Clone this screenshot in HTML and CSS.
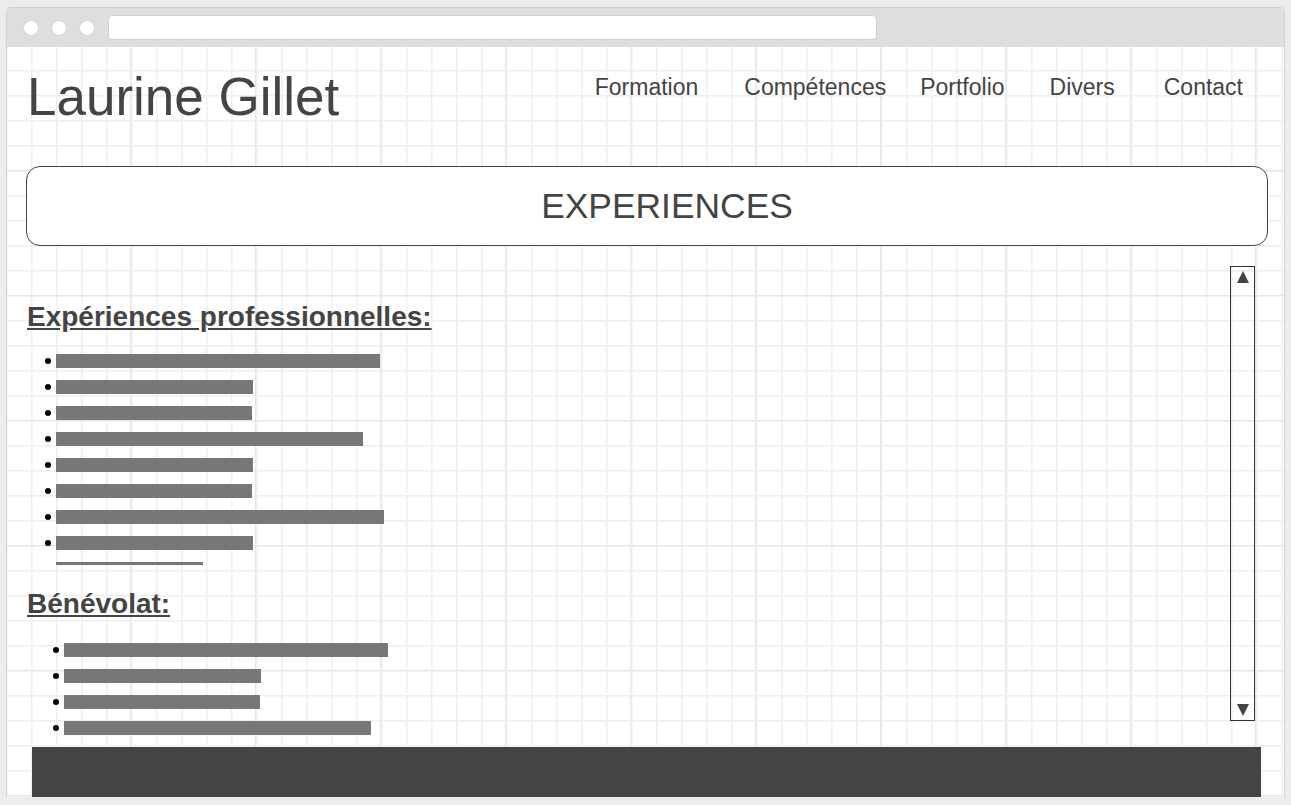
FILE: index.html
```html
<!DOCTYPE html>
<html lang="fr">
<head>
<meta charset="utf-8">
<title>Laurine Gillet</title>
<link rel="stylesheet" href="styles.css">
</head>
<body>
<div class="window">
  <div class="titlebar">
    <span class="dot"></span><span class="dot"></span><span class="dot"></span>
    <div class="urlbar"></div>
  </div>
  <div class="page">
    <div class="wrap">
      <header class="header">
        <h1 class="name">Laurine Gillet</h1>
        <nav class="nav">
          <a class="nav-item" href="#">Formation</a>
          <a class="nav-item" href="#">Compétences</a>
          <a class="nav-item" href="#">Portfolio</a>
          <a class="nav-item" href="#">Divers</a>
          <a class="nav-item" href="#">Contact</a>
        </nav>
      </header>
      <div class="banner">EXPERIENCES</div>
      <section class="scroller">
        <div class="scroll-content">
          <h2 class="section-title">Expériences professionnelles:</h2>
          <ul class="bars">
            <li><span class="bar" style="width:324px"></span></li>
            <li><span class="bar" style="width:197px"></span></li>
            <li><span class="bar" style="width:196px"></span></li>
            <li><span class="bar" style="width:307px"></span></li>
            <li><span class="bar" style="width:197px"></span></li>
            <li><span class="bar" style="width:196px"></span></li>
            <li><span class="bar" style="width:328px"></span></li>
            <li><span class="bar" style="width:197px"></span></li>
          </ul>
          <div class="rule"></div>
          <h2 class="section-title second">Bénévolat:</h2>
          <ul class="bars indent">
            <li><span class="bar" style="width:324px"></span></li>
            <li><span class="bar" style="width:197px"></span></li>
            <li><span class="bar" style="width:196px"></span></li>
            <li><span class="bar" style="width:307px"></span></li>
          </ul>
        </div>
        <div class="scrollbar">
          <span class="arrow up"></span>
          <span class="arrow down"></span>
        </div>
      </section>
    </div>
    <footer class="footer"></footer>
  </div>
</div>
</body>
</html>
```
FILE: styles.css
```css
* { box-sizing: border-box; }
html, body { margin: 0; padding: 0; }
body {
  background: #ececec;
  font-family: "Liberation Sans", Arial, sans-serif;
  color: #444;
  height: 805px;
  overflow: hidden;
}
.window {
  margin: 7px 0 0 6px;
  width: 1279px;
  border: 1px solid #d2d2d2;
  border-bottom: none;
  border-radius: 5px 5px 0 0;
  overflow: hidden;
  background: #fff;
}
.titlebar {
  height: 39px;
  background: #dedede;
  display: flex;
  align-items: center;
  padding-left: 16px;
}
.dot {
  width: 16px;
  height: 16px;
  border-radius: 50%;
  background: #fff;
  border: 1px solid #d6d6d6;
  margin-right: 12px;
}
.dot:nth-child(3) { margin-right: 13px; }
.urlbar {
  width: 769px;
  height: 25px;
  background: #fff;
  border: 1px solid #cfcfcf;
  border-radius: 4px;
  margin-top: -1px;
}
.page {
  height: 750px;
  background-color: #fff;
  background-image:
    linear-gradient(to right, #e6e6e6 1px, #f1f1f1 1px, #f1f1f1 2px, transparent 2px),
    linear-gradient(to bottom, #e6e6e6 1px, #f1f1f1 1px, #f1f1f1 2px, transparent 2px),
    linear-gradient(to right, #efefef 1px, #f6f6f6 1px, #f6f6f6 2px, transparent 2px),
    linear-gradient(to bottom, #efefef 1px, #f6f6f6 1px, #f6f6f6 2px, transparent 2px);
  background-size: 125px 125px, 125px 125px, 25px 25px, 25px 25px;
  background-position: -2px -2px, -2px -2px, -1px -2px, -1px -2px;
  display: flex;
  flex-direction: column;
}
.wrap {
  padding: 0 16px 0 19px;
}
.header {
  display: flex;
  justify-content: space-between;
  align-items: flex-start;
  padding-top: 23px;
}
.name {
  margin: 0 0 0 1px;
  font-weight: normal;
  font-size: 53px;
  line-height: 53px;
  color: #444;
}
.nav {
  display: flex;
  margin-top: 6px;
  padding-right: 25px;
}
.nav-item {
  font-size: 23px;
  line-height: 23px;
  color: #444;
  text-decoration: none;
}
.nav-item:nth-child(2) { margin-left: 46px; }
.nav-item:nth-child(3) { margin-left: 34px; }
.nav-item:nth-child(4) { margin-left: 45px; }
.nav-item:nth-child(5) { margin-left: 49px; }
.banner {
  margin-top: 43px;
  height: 80px;
  border: 1px solid #444;
  border-radius: 14px;
  background: #fff;
  text-align: center;
  padding-left: 40px;
  font-size: 35.4px;
  line-height: 78px;
  color: #444;
}
.scroller {
  height: 501px;
  display: flex;
  align-items: flex-start;
}
.scroll-content {
  flex: 1;
  height: 501px;
  overflow: hidden;
}
.section-title {
  margin: 55px 0 0 1px;
  font-size: 28px;
  line-height: 32px;
  font-weight: bold;
  text-decoration: underline;
  color: #444;
}
.section-title.second { margin-top: 23px; }
.bars {
  list-style: none;
  margin: 15px 0 0;
  padding: 0 0 0 19px;
}
.bars.indent {
  margin-top: 17px;
  padding-left: 27px;
}
.bars li {
  height: 26px;
  display: flex;
  align-items: center;
}
.bars li::before {
  content: "";
  width: 6px;
  height: 6px;
  border-radius: 50%;
  background: #000;
  margin-right: 5px;
  flex: none;
}
.bar {
  display: block;
  height: 14px;
  background: #777;
}
.rule {
  margin: 6px 0 0 30px;
  width: 147px;
  height: 3px;
  background: #777;
}
.scrollbar {
  margin: 20px 13px 0 0;
  width: 25px;
  height: 455px;
  border: 1px solid #333;
  display: flex;
  flex-direction: column;
  justify-content: space-between;
  align-items: center;
  padding: 4px 0 4px;
}
.arrow {
  width: 0;
  height: 0;
  border-left: 6px solid transparent;
  border-right: 6px solid transparent;
}
.arrow.up { border-bottom: 12px solid #444; }
.arrow.down { border-top: 12px solid #444; }
.footer {
  height: 50px;
  margin: 0 23px 0 25px;
  background: #444;
}
```
